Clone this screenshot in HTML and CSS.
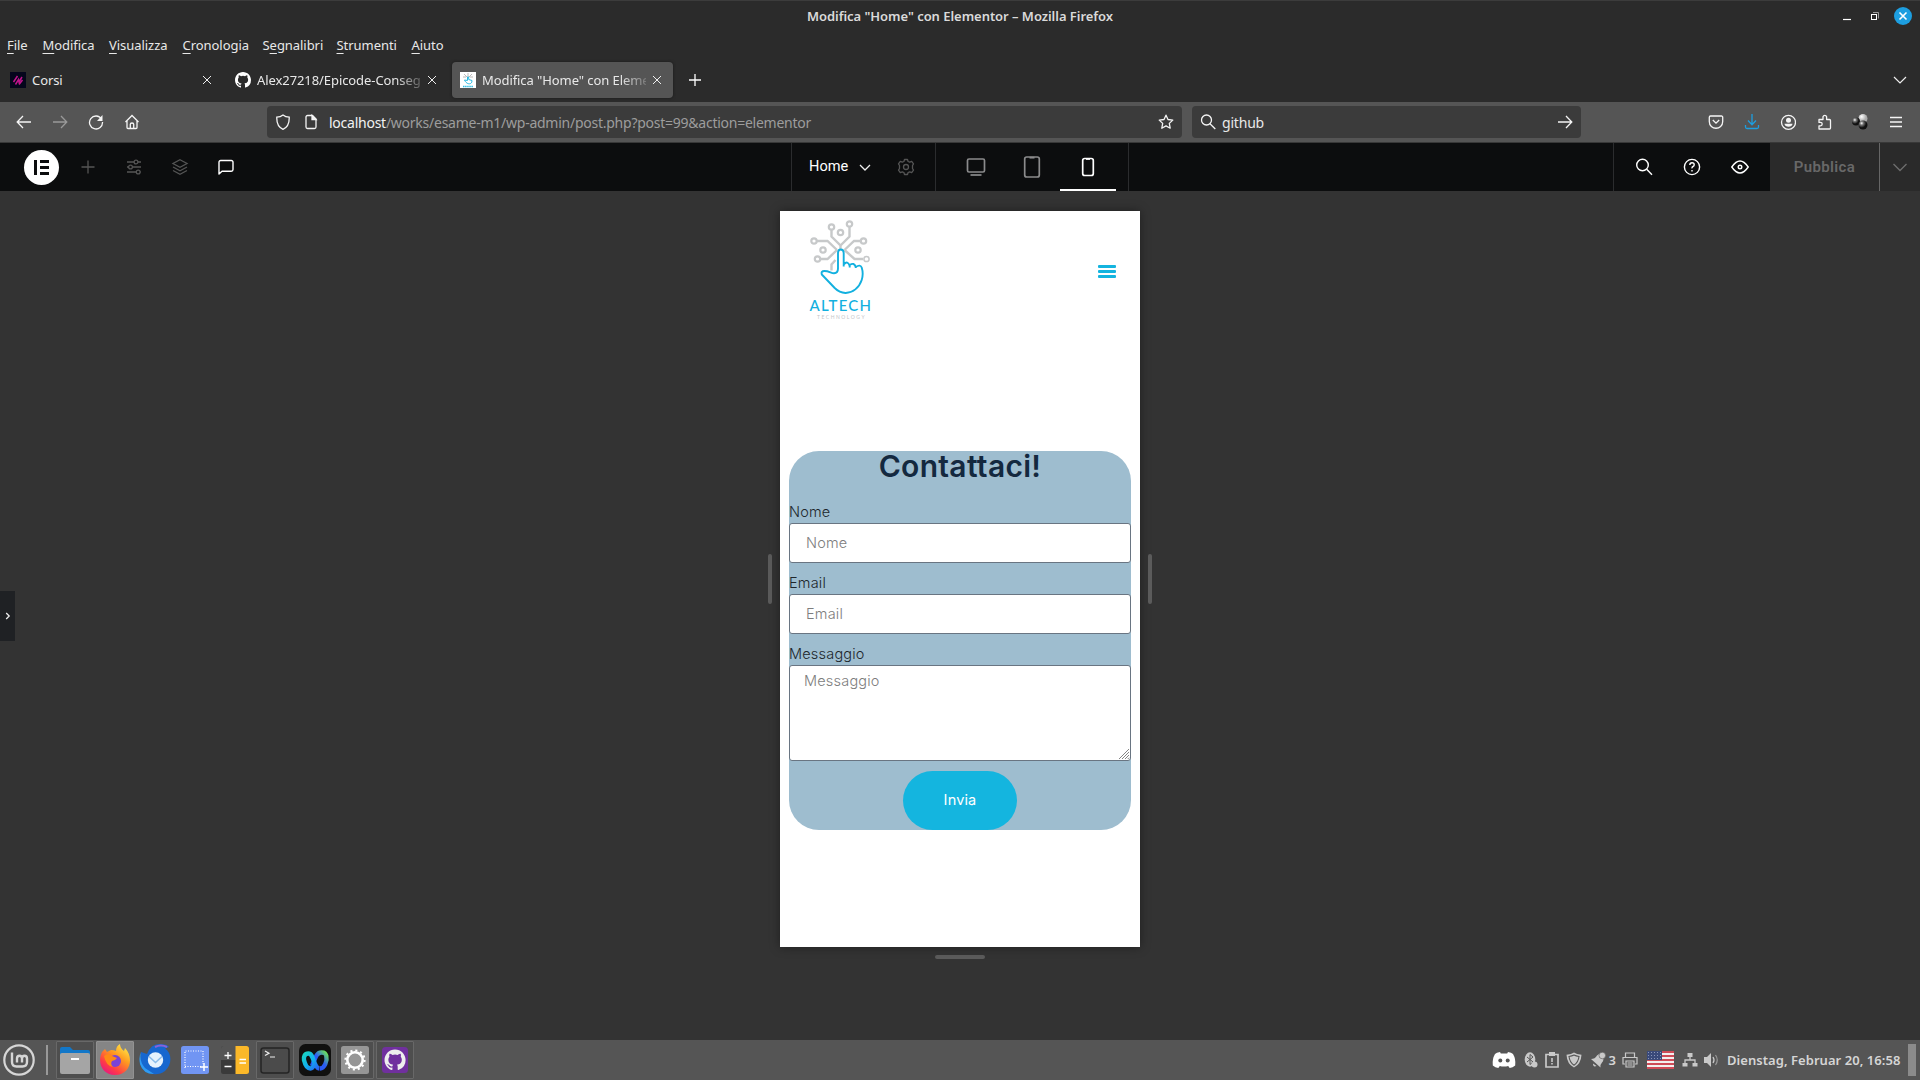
FILE: index.html
```html
<!DOCTYPE html>
<html lang="it">
<head>
<meta charset="utf-8">
<title>Modifica "Home" con Elementor</title>
<link rel="stylesheet" href="styles.css">
</head>
<body>
<header class="titlebar">
  <span class="window-title">Modifica "Home" con Elementor – Mozilla Firefox</span>
  <div class="window-buttons">
    <svg width="28" height="28" viewBox="0 0 28 28"><path d="M10 17.500h8" stroke="#fff" stroke-width="1.200"/></svg>
    <svg width="28" height="28" viewBox="0 0 28 28" fill="none"><path d="M12 10.500h5.500v6" stroke="#999"/><rect x="10.500" y="12.500" width="5" height="5" stroke="#fff"/></svg>
    <svg width="28" height="28" viewBox="0 0 28 28"><circle cx="14" cy="14" r="9" fill="#1d9ee0"/><path d="M10.500 10.500l7 7m0-7l-7 7" stroke="#fff" stroke-width="1.600"/></svg>
  </div>
</header>
<nav class="menubar">
  <span><u>F</u>ile</span><span><u>M</u>odifica</span><span><u>V</u>isualizza</span><span><u>C</u>ronologia</span><span>S<u>e</u>gnalibri</span><span><u>S</u>trumenti</span><span><u>A</u>iuto</span>
</nav>
<div class="tabs">
  <div class="tab">
    <svg width="16" height="16" viewBox="0 0 16 16"><rect width="16" height="16" fill="#05061c"/><path d="M3.500 10l4-6M5.500 12.500l3-5 .5 2.500 3-5M9 12.500l3.500-4.500" stroke="#c0148c" stroke-width="1.500" fill="none"/></svg>
    <span class="tab-label">Corsi</span>
    <svg width="10" height="10" viewBox="0 0 10 10"><path d="M1 1l8 8m0-8l-8 8" stroke="#eee"/></svg>
  </div>
  <div class="tab">
    <svg width="16" height="16" viewBox="0 0 16 16" fill="#fff"><path d="M8 0C3.580 0 0 3.580 0 8c0 3.540 2.290 6.530 5.470 7.590.4.070.55-.17.55-.38 0-.19-.01-.82-.01-1.490-2.010.37-2.530-.49-2.690-.94-.09-.23-.48-.94-.82-1.130-.28-.15-.68-.52-.01-.53.63-.01 1.080.58 1.230.82.72 1.210 1.870.87 2.330.66.07-.52.28-.87.51-1.070-1.780-.2-3.640-.89-3.640-3.950 0-.87.31-1.590.82-2.150-.08-.2-.36-1.020.08-2.120 0 0 .67-.21 2.200.82a7.600 7.600 0 0 1 4 0c1.530-1.040 2.200-.82 2.200-.82.44 1.100.16 1.920.08 2.120.51.56.82 1.270.82 2.150 0 3.070-1.870 3.750-3.650 3.950.29.25.54.73.54 1.480 0 1.070-.01 1.930-.01 2.200 0 .21.15.46.55.38A8 8 0 0 0 16 8c0-4.420-3.580-8-8-8z"/></svg>
    <span class="tab-label fade">Alex27218/Epicode-Conseg</span>
    <svg width="10" height="10" viewBox="0 0 10 10"><path d="M1 1l8 8m0-8l-8 8" stroke="#eee"/></svg>
  </div>
  <div class="tab selected">
    <svg width="16" height="16" viewBox="0 0 16 16"><rect width="16" height="16" fill="#fff"/><path d="M4 2l4 4 4-4M8 1v4M3 5h3M10 5h3" stroke="#bbb" fill="none"/><path d="M4.500 8l3 .5V5h1.200v2.500L12 8.500c.5 4-5 5-7.500-.5z" stroke="#2cb9e0" fill="none"/><path d="M3 14.500h10" stroke="#2cb9e0" stroke-width="1.500" stroke-dasharray="1.500 .6"/></svg>
    <span class="tab-label fade">Modifica "Home" con Eleme</span>
    <svg width="10" height="10" viewBox="0 0 10 10"><path d="M1 1l8 8m0-8l-8 8" stroke="#eee"/></svg>
  </div>
  <svg class="new-tab" width="14" height="14" viewBox="0 0 14 14"><path d="M7 1v12M1 7h12" stroke="#fff" stroke-width="1.300"/></svg>
  <svg class="all-tabs" width="14" height="14" viewBox="0 0 14 14"><path d="M1 4l6 6 6-6" stroke="#eee" stroke-width="1.200" fill="none"/></svg>
</div>
<div class="navbar">
  <div class="nav-buttons">
    <svg class="ic" viewBox="0 0 16 16"><path d="M15 8H1.500M7 2L1.200 8 7 14"/></svg>
    <svg class="ic dim" viewBox="0 0 16 16"><path d="M1 8h13.500M9 2l5.800 6L9 14"/></svg>
    <svg class="ic" viewBox="0 0 16 16"><path d="M13.500 5A6.500 6.500 0 1 0 14.500 8"/><path d="M14.500 1v6H9z" fill="#f5f5f5" stroke="none"/></svg>
    <svg class="ic" viewBox="0 0 16 16"><path d="M1.500 8L8 1.500 14.500 8M3 7v6.500a1 1 0 0 0 1 1h8a1 1 0 0 0 1-1V7M6.300 14.500V10.300q0-1.300 1.700-1.300t1.700 1.300v4.200"/></svg>
  </div>
  <div class="urlbar">
    <svg class="ic" viewBox="0 0 16 16"><path d="M8 1Q10.500 3 14.200 3.200C14.500 10 12.500 13.300 8 15.300 3.500 13.300 1.500 10 1.800 3.200 5.500 3 8 1 8 1z"/></svg>
    <svg class="ic page" viewBox="0 0 16 16"><path d="M9.500 1.500H4.500a1.500 1.500 0 0 0-1.500 1.500v10a1.500 1.500 0 0 0 1.500 1.500h7a1.500 1.500 0 0 0 1.500-1.500V5z"/><path d="M9 1.500V5.500h4z" fill="#eee"/></svg>
    <span class="url"><b>localhost</b>/works/esame-m1/wp-admin/post.php?post=99&amp;action=elementor</span>
    <svg class="ic star" viewBox="0 0 16 16"><path d="M8 1.200l2 4.300 4.800.6-3.500 3.300.9 4.800L8 11.900l-4.200 2.300.9-4.800L1.200 6.100 6 5.500z" stroke-linejoin="round"/></svg>
  </div>
  <div class="searchbar">
    <svg class="ic" viewBox="0 0 16 16"><circle cx="6.500" cy="6" r="5"/><path d="M10 9.800l5.300 5.200"/></svg>
    <span class="query">github</span>
    <svg class="ic go" viewBox="0 0 16 16"><path d="M1 8h13.500M9 2l5.800 6L9 14"/></svg>
  </div>
  <div class="nav-tools">
    <svg class="ic" viewBox="0 0 16 16"><path d="M2.500 2h11a1.200 1.200 0 0 1 1.200 1.200V7.500c0 9-13.400 9-13.400 0V3.200A1.200 1.200 0 0 1 2.500 2zM4.800 6L8 9.200 11.200 6"/></svg>
    <svg class="ic blue" viewBox="0 0 16 16"><path d="M8 0v10.500M4 6.500l4 4.200 4-4.200M1.500 11v2a1.500 1.500 0 0 0 1.500 1.500h10a1.500 1.500 0 0 0 1.500-1.500v-2"/></svg>
    <svg class="ic" viewBox="0 0 16 16"><circle cx="8.500" cy="8.300" r="7"/><circle cx="8.500" cy="6.200" r="2.500" fill="#f5f5f5" stroke="none"/><path d="M4.500 9.800h8c0 4-8 4-8 0z" fill="#f5f5f5" stroke="none"/></svg>
    <svg class="ic" viewBox="0 0 16 16"><path d="M3 5.500h4V2.700a1.900 1.900 0 0 1 3.600 0v2.800h2.900a1 1 0 0 1 1 1v7.500a1 1 0 0 1-1 1H3v-3.200h1.500a1.700 1.700 0 0 0 0-3.400H3z" stroke-linejoin="round"/></svg>
    <svg class="ic" viewBox="0 0 16 16"><defs><radialGradient id="ball" cx=".35" cy=".3"><stop offset="0" stop-color="#fff"/><stop offset=".4" stop-color="#777"/><stop offset="1" stop-color="#111"/></radialGradient><radialGradient id="ball-light" cx=".35" cy=".3"><stop offset="0" stop-color="#fff"/><stop offset="1" stop-color="#aaa"/></radialGradient></defs><g stroke="none" fill="url(#ball)"><circle cx="11" cy="4.500" r="4.500" fill="url(#ball-light)"/><circle cx="4" cy="7.500" r="4"/><circle cx="11" cy="11" r="4.500"/></g></svg>
    <svg class="ic" viewBox="0 0 16 16"><path d="M2 3.500h12M2 8h12M2 12.500h12"/></svg>
  </div>
</div>
<div class="editor-bar">
  <div class="logo"><i></i><div><i></i><i></i><i></i></div></div>
  <div class="editor-tools">
    <svg class="ed dark" viewBox="0 0 20 20"><path d="M10 3.500v13M3.500 10h13"/></svg>
    <svg class="ed dark" viewBox="0 0 20 20"><path d="M3 5h7M14 5h3M3 10h1.500M8.500 10H17M3 15h9.500M16.500 15h.5"/><circle cx="12" cy="5" r="1.900"/><circle cx="6.500" cy="10" r="1.900"/><circle cx="14.200" cy="15" r="1.900"/></svg>
    <svg class="ed dark" viewBox="0 0 20 20"><path d="M10 2.800L17 6.500l-7 3.700-7-3.700zM3 10l7 3.700L17 10M3 13.500l7 3.700 7-3.700"/></svg>
    <svg class="ed bright" viewBox="0 0 20 20"><path d="M3 17V5.200A1.700 1.700 0 0 1 4.700 3.500h10.600A1.700 1.700 0 0 1 17 5.200v7.300a1.700 1.700 0 0 1-1.700 1.700H6z" stroke-linejoin="round"/></svg>
  </div>
  <div class="page-picker">
    <span>Home</span>
    <svg width="12" height="12" viewBox="0 0 12 12"><path d="M1 4l5 5 5-5" stroke="#eee" stroke-width="1.300" fill="none"/></svg>
    <svg class="ed dark" viewBox="0 0 20 20"><path d="M8.500 2.500h3l.6 2 1.600.7 2-.8 1.800 2.400-1 1.700v3l1 1.700-1.800 2.400-2-.8-1.600.7-.6 2h-3l-.6-2-1.600-.7-2 .8L2.500 13.200l1-1.700v-3l-1-1.700 1.800-2.400 2 .8 1.600-.7z" stroke-linejoin="round"/><circle cx="10" cy="10" r="2.500"/></svg>
  </div>
  <div class="devices">
    <div><svg width="24" height="24" viewBox="0 0 24 24"><rect x="3.500" y="4" width="17" height="13" rx="1.500"/><path d="M6.500 20h11"/></svg></div>
    <div><svg width="24" height="24" viewBox="0 0 24 24"><rect x="4.700" y="2" width="14.600" height="20" rx="2"/><path d="M9.500 2.700h5"/></svg></div>
    <div class="active"><svg width="24" height="24" viewBox="0 0 24 24"><rect x="6.700" y="3.500" width="10.600" height="17" rx="2"/><path d="M10 4h4"/></svg></div>
  </div>
  <div class="editor-actions">
    <svg class="ed bright" viewBox="0 0 20 20"><circle cx="8.500" cy="8" r="5.800"/><path d="M12.700 12.300l5.300 5.500"/></svg>
    <svg class="ed bright" viewBox="0 0 20 20"><circle cx="10" cy="10" r="7.600"/><path d="M7.800 8q0-2.300 2.200-2.300t2.200 2q0 1.300-1.200 1.800t-1 1.800"/><path d="M10 13v1.500"/></svg>
    <svg class="ed bright" viewBox="0 0 20 20"><path d="M1.800 10q8.200-12 16.400 0-8.200 12-16.400 0z"/><circle cx="10" cy="10" r="1.800"/></svg>
  </div>
  <div class="publish">Pubblica</div>
  <div class="publish-more"><svg width="16" height="16" viewBox="0 0 16 16"><path d="M1.500 5L8 11.500 14.500 5" stroke="#6d6d6d" stroke-width="1.400" fill="none"/></svg></div>
</div>
<main class="canvas">
  <div class="panel-toggle"><svg width="6" height="8" viewBox="0 0 6 8"><path d="M1.200 1l3 3-3 3" stroke="#eee" stroke-width="1.300" fill="none"/></svg></div>
  <div class="stage">
    <i class="grip side"></i>
    <div class="phone">
      <div class="site-head">
        <svg class="brand" width="66" height="110" viewBox="0 0 66 110">
          <g fill="none" stroke="#c7c9ca" stroke-width="2.400">
            <path d="M31.500 29.500v-4l-9-9V10M31.500 25.500l9-9V7M28 30L18.500 21H8M28 30l-9.500 9H11M35.500 30L45 21h6M35.500 30l10 9H54M22.500 50.500v-6l4-4.500"/>
            <g stroke-width="2.200"><circle cx="22.500" cy="7" r="2.700"/><circle cx="40.500" cy="4" r="2.700"/><circle cx="31.500" cy="12.500" r="2.700"/><circle cx="5" cy="21" r="2.700"/><circle cx="54.500" cy="21" r="2.700"/><circle cx="14" cy="30" r="2.700"/><circle cx="49" cy="30" r="2.700"/><circle cx="8.500" cy="39" r="2.700"/><circle cx="57.500" cy="39" r="2.600" stroke-width="1.500"/></g>
          </g>
          <path d="M29 46V33q0-3.500 2.800-3.500t2.900 3.500v13.500M34.700 44.500q4-4.500 6 1.500v1.500M40.700 45q4.500-3 6 2v1M46.700 47q4.500-3 6 .5c5.500 17.500-13.500 34-27 20.500L12.800 54.500q-1-3.500 2.500-3.500c5 0 6.700 2.300 9.700 2.300q4-.3 4-4.800V46" fill="#fff" stroke="#12b0df" stroke-width="1.900" stroke-linejoin="round"/>
          <text class="brand-name" x=".5" y="91" textLength="61.500">ALTECH</text>
          <text class="brand-sub" x="8" y="99" textLength="47.500">TECHNOLOGY</text>
        </svg>
        <div class="burger"><i></i><i></i><i></i></div>
      </div>
      <section class="contact">
        <h2>Contattaci!</h2>
        <label>Nome</label>
        <div class="field">Nome</div>
        <label>Email</label>
        <div class="field">Email</div>
        <label>Messaggio</label>
        <div class="field area">Messaggio<svg width="12" height="12" viewBox="0 0 12 12"><path d="M1 11L11 1M4 11l7-7M7 11l4-4M9.700 11l1.300-1.300" stroke="#777" stroke-width=".9"/></svg></div>
        <button class="send">Invia</button>
      </section>
    </div>
    <i class="grip side"></i>
  </div>
  <i class="grip bottom"></i>
</main>
<footer class="taskbar">
  <div class="mint"><svg width="32" height="32" viewBox="0 0 32 32" fill="none" stroke="#d6d6d6"><circle cx="16" cy="16" r="14.700" stroke-width="2.200"/><path d="M9 8.500v9.500q0 4.500 4.500 4.500h6q4.500 0 4.500-4.500v-3.500q0-2.700-2.500-2.700T19 14.500v4M19 14.500q0-2.700-2.500-2.700T14 14.500v4" stroke-width="2.400"/></svg></div>
  <i class="divider"></i>
  <div class="task open"><svg width="32" height="32" viewBox="0 0 32 32"><path d="M1 5q0-2 2-2h8l3 3h15q2 0 2 2v10H1z" fill="#1277c8"/><rect x="1" y="9" width="30" height="21" rx="2" fill="#a5a5a5"/><path d="M12 15h8" stroke="#fff" stroke-width="2"/></svg></div>
  <div class="task focus"><svg width="32" height="32" viewBox="0 0 32 32"><defs><linearGradient id="fx" x1=".9" y1="0" x2=".2" y2="1"><stop offset="0" stop-color="#fff44f"/><stop offset=".4" stop-color="#ff9a1f"/><stop offset=".75" stop-color="#ff3b47"/><stop offset="1" stop-color="#e31587"/></linearGradient></defs><path d="M3 8l3-3 2 3 4-2q3 0 5 1 0-5 4-7 0 4 4 7l1-3c9 9 6 27-10 27C3 31-2 18 3 8z" fill="url(#fx)"/><circle cx="16" cy="17" r="6" fill="#7a43d6"/><path d="M5 12q5-4 8 0l5 2q-2 3-5 3-2 3 1 6-7-1-9-11z" fill="#ff8a16"/></svg></div>
  <div class="task"><svg width="32" height="32" viewBox="0 0 32 32"><path d="M2 8l6 2Q12 0 20 0q8 0 10 3l-4 1.500c7 4 7.500 16 0 22.500-9 7-23 2-25-8z" fill="#1767cf"/><path d="M2 8q-2 9 4 16l9 6Q4 30 1 20-.5 13 2 8z" fill="#2f9bf2"/><circle cx="16.500" cy="16" r="7.700" fill="#e6f2fd"/><path d="M10 12.500l6.500 6 6.500-6" stroke="#8bbce9" stroke-width="1.500" fill="none"/><path d="M16 3q6-3 12 0" stroke="#8a62d8" stroke-width="2" fill="none"/></svg></div>
  <div class="task"><svg width="32" height="32" viewBox="0 0 32 32"><rect x="2" y="2" width="28" height="28" rx="2.500" fill="#7195f3"/><path d="M6 24V7h18v13M6 22.500h16" fill="none" stroke="#fff" stroke-width="1.200" stroke-dasharray="1 1.500"/><path d="M25 19v8M21 23h8" stroke="#fff" stroke-width="1.500"/></svg></div>
  <div class="task"><svg width="32" height="32" viewBox="0 0 32 32"><rect x="2" y="2" width="28" height="28" rx="2.500" fill="#3a3a3a"/><path d="M2 16h15V2H4.500Q2 2 2 4.500z" fill="#555"/><path d="M16.500 2h11Q30 2 30 4.500v23q0 2.500-2.500 2.500h-11z" fill="#fbb829"/><path d="M5.500 11.500h7M9 8v7M5.500 22.500h7M20.500 15.500h6.500M20.500 19h6.500" stroke="#fff" stroke-width="1.300"/></svg></div>
  <div class="task open"><svg width="32" height="32" viewBox="0 0 32 32"><rect x="2" y="4" width="28" height="25" rx="2.500" fill="#4b4b4b" stroke="#252525" stroke-width="1.500"/><path d="M6 7l4 2.200L6 11.500M11 13h5" stroke="#eee" stroke-width="1.200" fill="none"/></svg></div>
  <div class="task"><svg width="32" height="32" viewBox="0 0 32 32"><defs><linearGradient id="wx-a" x1="0" y1="0" x2="1" y2="1"><stop offset="0" stop-color="#19d2c4"/><stop offset=".5" stop-color="#11b1ee"/><stop offset="1" stop-color="#2a5cf4"/></linearGradient><linearGradient id="wx-b" x1="0" y1="1" x2="1" y2="0"><stop offset="0" stop-color="#2a5cf4"/><stop offset=".55" stop-color="#2a5cf4"/><stop offset="1" stop-color="#6be35a"/></linearGradient></defs><rect width="32" height="32" rx="6.500" fill="#10100f"/><g fill="none" stroke-width="4.400"><path d="M13 22C17 12 18 8.500 22.500 8.500c3.500 0 4 1 4.800 3.500 1.200 5-1.800 12.500-6.300 12.500" stroke="url(#wx-b)"/><path d="M20.500 24.500C14.500 24 15 9.500 9.500 9.500 5.500 9.500 4.500 13 5 16c1 4.500 3.500 8.500 6.500 8.500 2 0 3-2 4-4.500" stroke="url(#wx-a)"/></g></svg></div>
  <div class="task open"><svg width="32" height="32" viewBox="0 0 32 32"><rect x="2" y="2" width="28" height="28" rx="2.500" fill="#969696"/><circle cx="16" cy="16" r="9.500" fill="none" stroke="#fff" stroke-width="2.200" stroke-dasharray="2.100 2.874"/><circle cx="16" cy="16" r="7.700" fill="none" stroke="#fff" stroke-width="2.600"/></svg></div>
  <div class="task open"><svg width="32" height="32" viewBox="0 0 32 32"><rect x="3" y="3" width="26" height="26" rx="3.500" fill="#70309e"/><g transform="translate(5.500 5.500) scale(1.320)" fill="#eee"><path d="M8 0C3.580 0 0 3.580 0 8c0 3.540 2.290 6.530 5.470 7.590.4.070.55-.17.55-.38 0-.19-.01-.82-.01-1.490-2.010.37-2.530-.49-2.690-.94-.09-.23-.48-.94-.82-1.130-.28-.15-.68-.52-.01-.53.63-.01 1.080.58 1.230.82.72 1.210 1.870.87 2.330.66.07-.52.28-.87.51-1.070-1.780-.2-3.640-.89-3.640-3.950 0-.87.31-1.590.82-2.150-.08-.2-.36-1.020.08-2.120 0 0 .67-.21 2.200.82a7.600 7.600 0 0 1 4 0c1.530-1.040 2.200-.82 2.200-.82.44 1.100.16 1.920.08 2.120.51.56.82 1.270.82 2.150 0 3.070-1.870 3.750-3.650 3.950.29.25.54.73.54 1.480 0 1.070-.01 1.930-.01 2.200 0 .21.15.46.55.38A8 8 0 0 0 16 8c0-4.420-3.580-8-8-8z"/></g></svg></div>
  <div class="tray">
    <svg class="discord" width="24" height="18" viewBox="0 0 24 18"><path d="M8 1Q4.500 1.500 3 3 0 8 .8 14.500q2.500 2.300 5.500 2.500l1.500-2q4 1 8.400 0l1.500 2q3-.2 5.500-2.500Q24 8 21 3q-1.500-1.500-5-2l-.8 1.500H8.800z" fill="#fff"/><circle cx="8.300" cy="9.500" r="2" fill="#555"/><circle cx="15.700" cy="9.500" r="2" fill="#555"/></svg>
    <svg class="t22" viewBox="0 0 16 16"><ellipse cx="7" cy="7.500" rx="5.300" ry="7.200" fill="#c9c9c9"/><path d="M4 5l6 5-3 2.500v-10L10 5l-6 5" stroke="#555" fill="none"/><circle cx="11.500" cy="12.500" r="3" fill="#c9c9c9"/></svg>
    <svg class="t22" viewBox="0 0 16 16"><path d="M2 2.500h12V15H2z" fill="none" stroke="#c9c9c9" stroke-width="1.700"/><path d="M5 0h6v4H5zM7.200 6h1.600v4H7.200zM7.200 11h1.600v1.600H7.200z" fill="#c9c9c9"/></svg>
    <svg class="t22" viewBox="0 0 16 16"><path d="M8 .5q2.500 1.700 7.500 2.200Q15 12 8 15.500 1 12 .5 2.700 5.500 2.200 8 .5z" fill="#c9c9c9"/><path d="M8 3q2 1 5 1.500Q12.300 10.500 8 13.200 3.700 10.500 3 4.500 6 4 8 3z" stroke="#555" stroke-width="1.100" fill="none"/></svg>
    <svg class="t22 bell" viewBox="0 0 16 16"><path d="M1 7q4 0 6-3.500 3-3 5-1l1.500 3q0 4-1.500 5-2 2-1.500 5zM3 11.500l3.500 2.500q-3.500 1.500-3.500-2.500z" fill="#c9c9c9"/><circle cx="12.300" cy="3.500" r="3.300" fill="#c9c9c9" stroke="#555" stroke-width=".6"/></svg>
    <span class="count">3</span>
    <svg class="t22" viewBox="0 0 16 16"><path d="M3.500 5V1h9v4M3 12H1V5.500h14V12h-2M4 9h8v6H4zM5.500 11h5M5.500 13h5" fill="none" stroke="#c9c9c9" stroke-width="1.200"/></svg>
    <div class="flag"><i></i></div>
    <svg class="t22" viewBox="0 0 16 16"><path d="M5.500 1h5v4h-5zM.5 11h5v3.500h-5zM10.500 11h5v3.500h-5z" fill="#c9c9c9"/><path d="M8 5v3M3 11V8h10v3" stroke="#c9c9c9" stroke-width="1.300" fill="none"/></svg>
    <svg class="t22" viewBox="0 0 16 16"><path d="M1 5h3l4-4v14l-4-4H1z" fill="#c9c9c9"/><path d="M10 5q2 3 0 6" stroke="#c9c9c9" stroke-width="1.300" fill="none"/><path d="M12.500 3q3.500 5 0 10" stroke="#999" stroke-width="1.200" fill="none"/></svg>
    <span class="clock">Dienstag, Februar 20, 16:58</span>
    <i class="show-desktop"></i>
  </div>
</footer>
</body>
</html>
```
FILE: styles.css
```css
* { box-sizing: border-box; }
body {
  margin: 0;
  width: 1920px;
  height: 1080px;
  overflow: hidden;
  display: flex;
  flex-direction: column;
  background: #2b2b2b;
  color: #e8e8e8;
  font: 13px "Noto Sans", sans-serif;
  white-space: nowrap;
}
svg { flex: none; display: block; }
i { display: block; flex: none; }

/* window frame */
.titlebar {
  height: 31px;
  border-top: 1px solid #3c3c3c;
  display: grid;
  grid-template-columns: 1fr auto 1fr;
  align-items: center;
}
.window-title { grid-column: 2; font-size: 13px; font-weight: 600; color: #dadada; letter-spacing: -0.04px; }
.window-buttons { display: flex; justify-content: flex-end; padding-right: 3px; }
.menubar {
  height: 29px;
  padding: 0 0 2px 7px;
  display: grid;
  grid-template-columns: 35.5px 66.5px 73.5px 80px 74px 75px auto;
  align-items: center;
  letter-spacing: -0.05px;
}
.menubar u { text-underline-offset: 3px; }

/* tabs */
.tabs { height: 42px; display: flex; align-items: center; padding: 0 13px 2px 2px; }
.tab { width: 221px; height: 36px; display: flex; align-items: center; gap: 6px; padding: 0 11px 0 8px; margin-right: 4px; border-radius: 4px; }
.tab.selected { background: #555; box-shadow: 0 0 3px #1a1a1a; }
.tab-label { flex: 1; min-width: 0; letter-spacing: -0.08px; }
.fade { mask-image: linear-gradient(to right, #000 138px, transparent 172px); }
.tab .fade { margin-right: -6px; }
.fade + svg { margin-left: 6px; }
.new-tab { margin-left: 11px; }
.all-tabs { margin-left: auto; }

/* navigation toolbar */
.navbar { height: 41px; background: #555; border-bottom: 1px solid #383838; display: flex; align-items: center; }
.ic { width: 16px; height: 16px; fill: none; stroke: #f5f5f5; stroke-width: 1.3; }
.ic.dim { stroke: #999; }
.ic.blue { stroke: #1d9ee0; }
.nav-buttons { width: 267px; display: flex; gap: 20px; padding-left: 16px; }
.urlbar { width: 915px; height: 32px; display: flex; align-items: center; background: #3b3b3b; border-radius: 4px; padding: 0 8px; }
.page { margin: 0 10px 0 12px; }
.url { color: #9d9d9d; font-size: 14px; letter-spacing: -0.25px; }
.url b { font-weight: 400; color: #f2f2f2; }
.star { margin-left: auto; }
.searchbar { width: 389px; height: 32px; margin-left: 10px; display: flex; align-items: center; background: #3b3b3b; border-radius: 4px; padding: 0 8px; }
.query { margin-left: 6px; font-size: 14px; letter-spacing: -0.2px; }
.go { margin-left: auto; }
.nav-tools { display: flex; gap: 20px; margin-left: auto; padding-right: 16px; }

/* editor top bar */
.editor-bar { height: 48px; background: #0c0d0e; display: flex; align-items: center; }
.logo { width: 35px; height: 35px; margin-left: 24px; border-radius: 50%; background: #fff; display: flex; align-items: center; justify-content: center; gap: 3px; }
.logo > i { width: 3px; height: 15px; background: #0c0d0e; }
.logo div { display: grid; gap: 3px; }
.logo div i { width: 9px; height: 3px; background: #0c0d0e; }
.ed { width: 20px; height: 20px; fill: none; stroke: #555; stroke-width: 1.3; }
.ed.bright { stroke: #fff; stroke-width: 1.4; }
.editor-tools { width: 732px; display: flex; gap: 26.2px; padding-left: 18.5px; }
.page-picker { width: 145px; height: 48px; border-left: 1px solid #2b2c2e; border-right: 1px solid #2b2c2e; display: flex; align-items: center; padding-left: 17px; font: 15px Roboto, sans-serif; color: #fff; }
.page-picker span { width: 50px; padding-bottom: 2px; font-size: 14.6px; }
.page-picker .ed { margin-left: 25px; }
.devices { width: 193px; height: 48px; display: flex; justify-content: center; border-right: 1px solid #2b2c2e; }
.devices div { width: 56px; display: flex; align-items: center; justify-content: center; }
.devices svg { fill: none; stroke: #8b8b8c; stroke-width: 1.7; }
.devices .active { border-bottom: 2px solid #fff; padding-top: 2px; }
.devices .active svg { stroke: #fff; }
.editor-actions { height: 48px; margin-left: auto; border-left: 1px solid #2b2c2e; width: 157px; display: flex; align-items: center; gap: 28px; padding-left: 20px; }
.publish { width: 109px; height: 48px; background: #2a2a2a; color: #686868; font: 600 15px/48px Roboto, sans-serif; text-align: center; letter-spacing: 0.35px; }
.publish-more { width: 41px; height: 48px; background: #2a2a2a; border-left: 1px solid #666; display: grid; place-items: center; }

/* responsive preview */
.canvas { position: relative; height: 849px; background: #333; padding-top: 20px; }
.panel-toggle { position: absolute; left: 0; top: 400px; width: 15px; height: 50px; background: #1f2124; display: grid; place-items: center; }
.stage { display: flex; justify-content: center; align-items: center; gap: 8px; height: 736px; }
.grip { background: #5b5b5b; border-radius: 2px; }
.grip.side { width: 4px; height: 50px; }
.grip.bottom { width: 50px; height: 4px; margin: 8px auto 0; }
.phone { width: 360px; height: 736px; background: #fff; box-shadow: 0 0 10px rgba(0, 0, 0, .4); font-family: Inter, sans-serif; padding: 0 9px; }
.site-head { height: 240px; display: flex; justify-content: space-between; padding: 9px 15px 0 19.5px; }
.brand { font-family: Lato, sans-serif; }
.brand-name { font-size: 15px; font-weight: 500; fill: #12b0df; }
.brand-sub { font-size: 5px; fill: #c4c5c8; }
.burger { display: flex; flex-direction: column; gap: 2px; padding-top: 45px; }
.burger i { width: 18px; height: 3px; border-radius: 1px; background: #14b4df; }
.contact { height: 379px; background: #9ebdcf; border-radius: 30px; color: #20262b; display: flex; flex-direction: column; }
.contact h2 { margin: 0 0 14px; height: 36px; font-size: 30px; line-height: 30px; font-weight: 600; text-align: center; color: #14293f; letter-spacing: 0.3px; }
.contact label { height: 22px; font-size: 14.5px; line-height: 22px; font-weight: 300; letter-spacing: 0.2px; }
.field { height: 40px; background: #fff; border: 1px solid #697582; border-radius: 3px; padding: 0 16px; font-size: 14.5px; line-height: 38px; font-weight: 300; letter-spacing: 0.2px; color: #7d7d7d; margin-bottom: 9px; }
.area { height: 96px; padding: 4px 0 0 14px; line-height: 22px; display: flex; justify-content: space-between; margin-bottom: 10px; }
.area svg { align-self: flex-end; }
.send { align-self: center; width: 114px; height: 59px; border: 0; border-radius: 30px; padding: 0 0 2px; background: #14b5df; color: #fff; font: 400 14.5px Inter, sans-serif; letter-spacing: 0.15px; }

/* desktop taskbar */
.taskbar { height: 40px; background: #555; display: flex; align-items: center; }
.mint { width: 46px; padding-left: 3px; }
.divider { width: 2px; height: 30px; margin-right: 7px; background: #999; }
.task { width: 38px; height: 38px; margin: 0 1px; display: grid; place-items: center; border: 1px solid transparent; border-radius: 1px; }
.open { border-color: #686868; background: #4e4e4e; }
.focus { background: #858585; border-color: #929292; }
.tray { margin-left: auto; display: flex; align-items: center; padding-right: 4px; color: #d5d5d5; }
.discord { margin-right: 4px; }
.t22 { width: 16px; height: 16px; margin: 0 2.7px; }
.bell { margin-left: 5.5px; }
.count { margin: 0 3px 0 0; font-weight: 600; }
.flag { width: 27px; height: 18px; margin: 0 5px 0 7px; background: repeating-linear-gradient(#cf4b57 0 2px, #f3efef 2px 4px); }
.flag i { width: 15px; height: 9px; background: radial-gradient(circle, #8b96b8 30%, #3a4a7a 45%) 0 0 / 3px 3px; }
.clock { width: 181px; margin-left: 5px; font-size: 13px; font-weight: 600; letter-spacing: 0.05px; }
.show-desktop { width: 8px; height: 32px; background: #8b8b8b; }
```
